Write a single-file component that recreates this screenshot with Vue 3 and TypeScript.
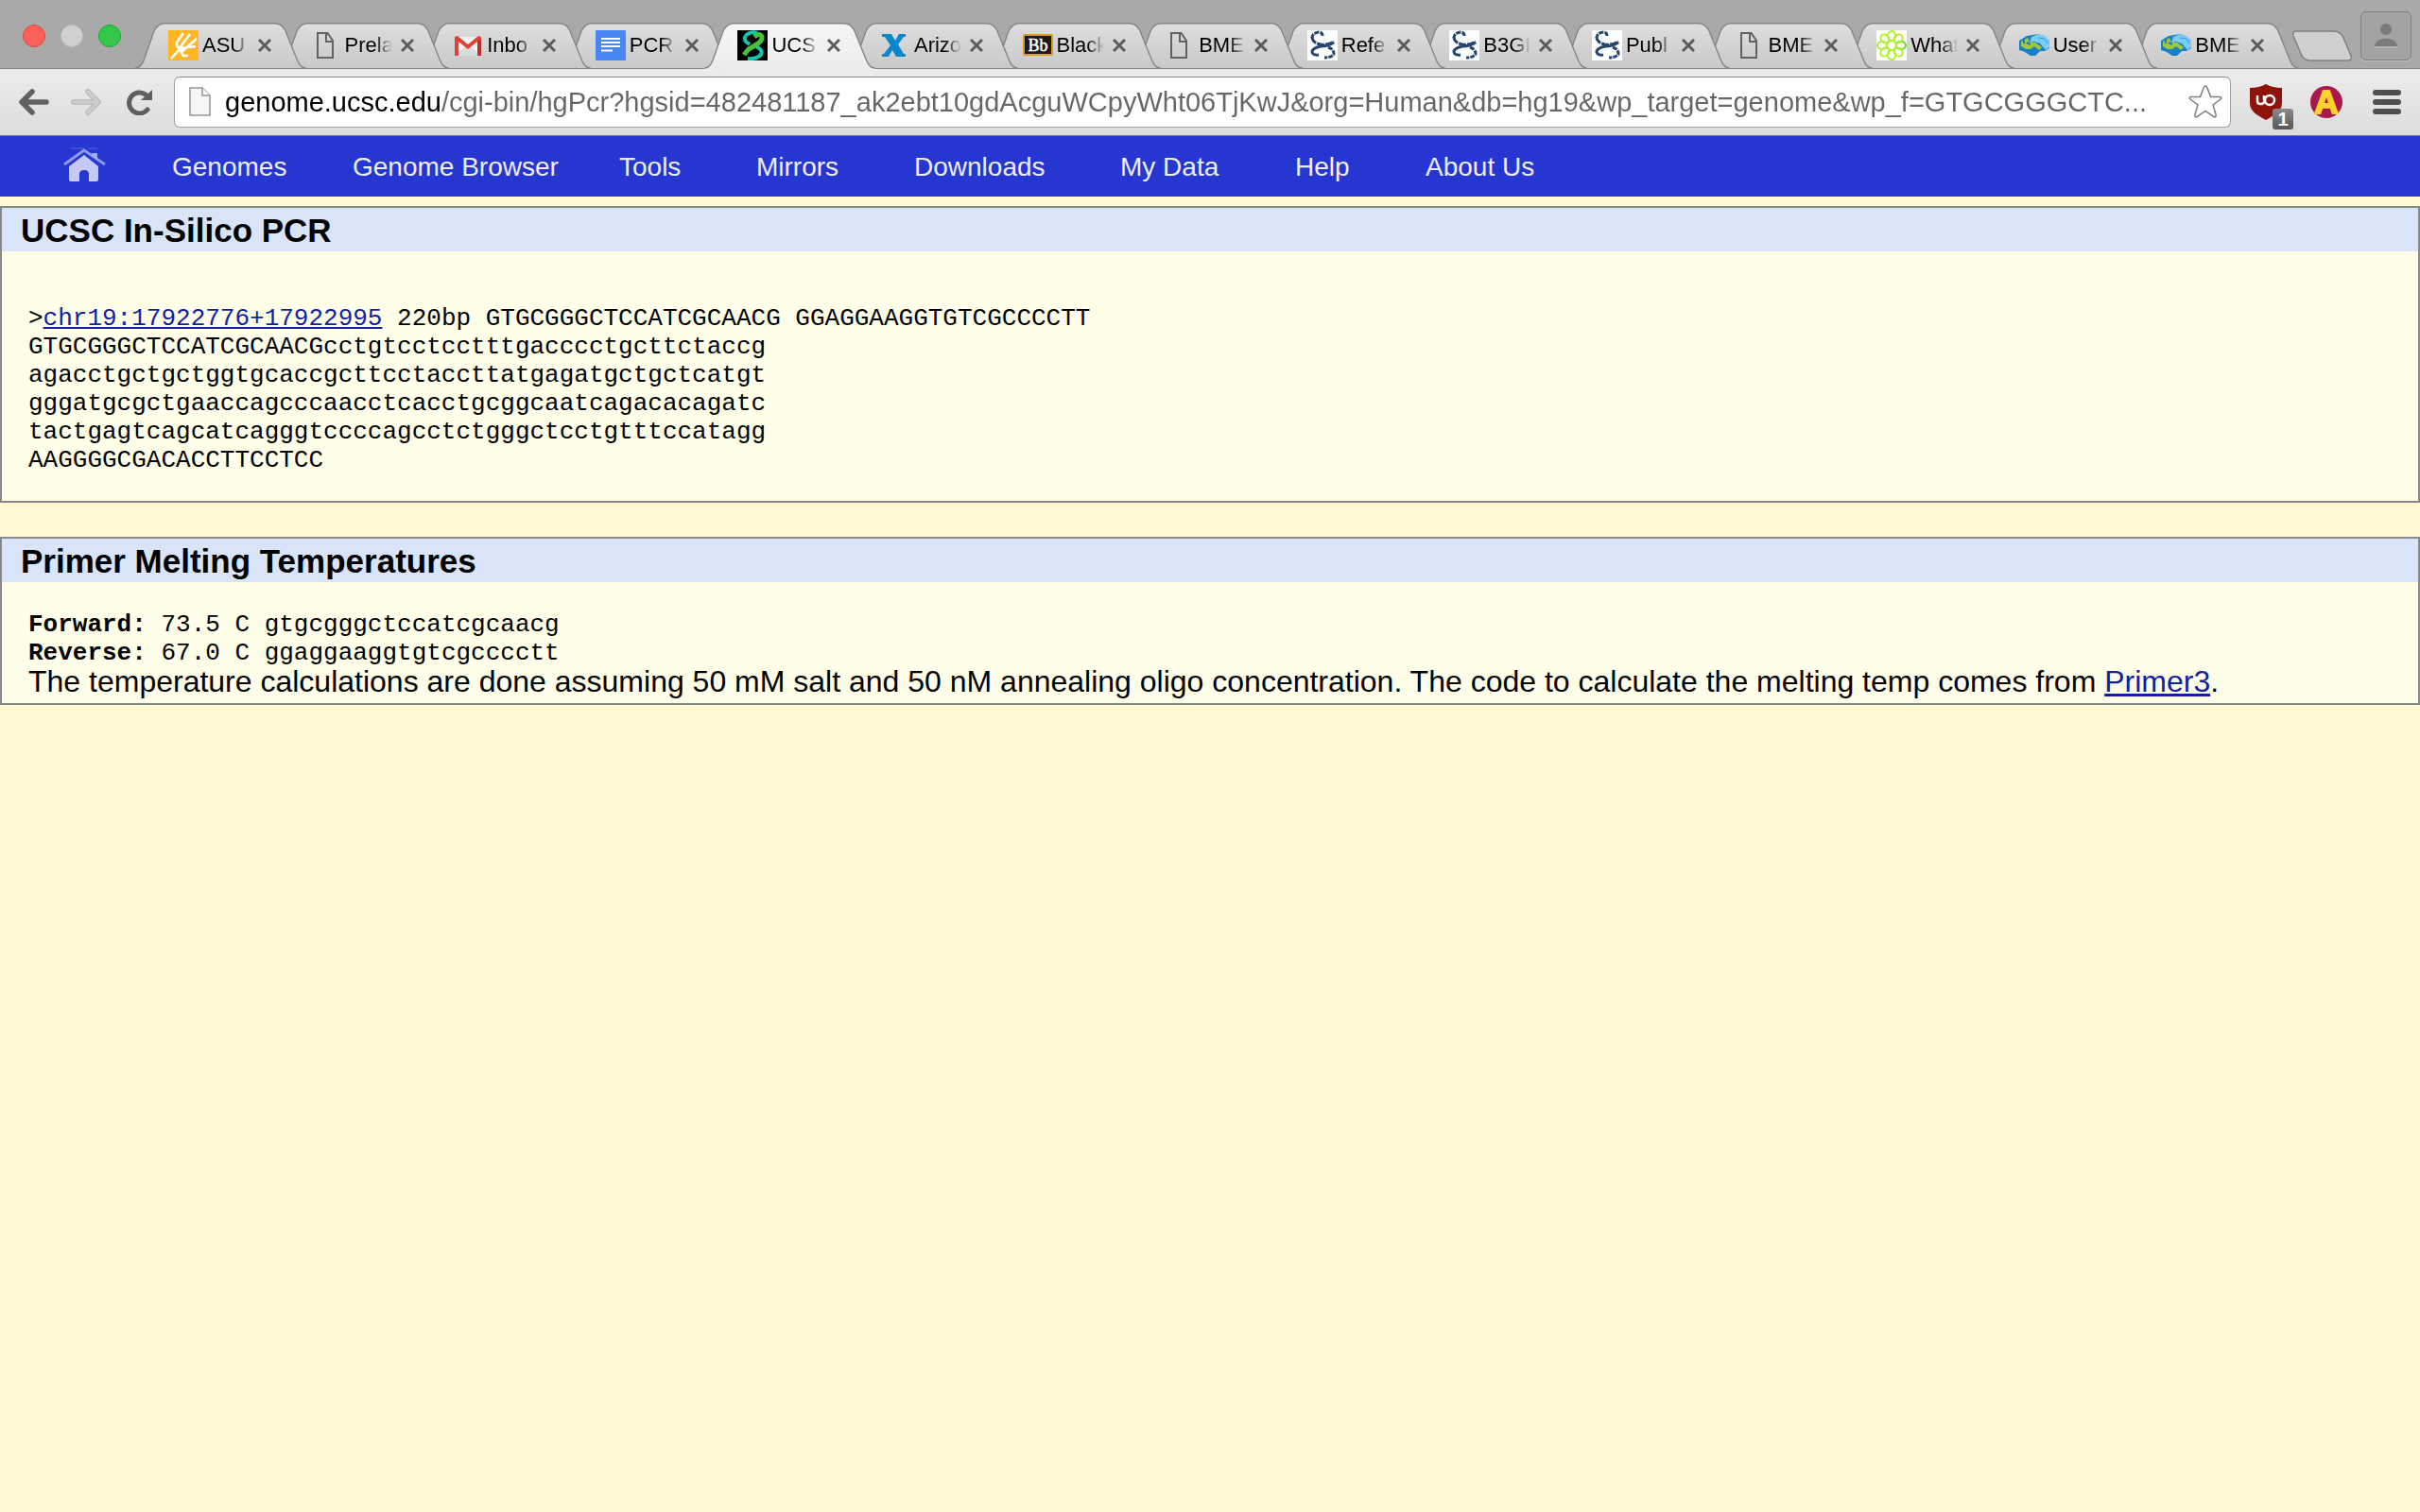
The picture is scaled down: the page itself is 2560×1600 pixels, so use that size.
<script setup lang="ts">
import { ref } from 'vue'

type Icon = 'fork' | 'page' | 'mail' | 'doc' | 'genome' | 'xtab' | 'board' | 'ncbi' | 'flower' | 'globe'

interface Tab {
  title: string
  icon: Icon
}

interface Primer {
  label: string
  temp: string
  seq: string
}

const tabs: Tab[] = [
  { title: 'ASU', icon: 'fork' },
  { title: 'Prela', icon: 'page' },
  { title: 'Inbo', icon: 'mail' },
  { title: 'PCR', icon: 'doc' },
  { title: 'UCS', icon: 'genome' },
  { title: 'Arizo', icon: 'xtab' },
  { title: 'Black', icon: 'board' },
  { title: 'BME', icon: 'page' },
  { title: 'Refe', icon: 'ncbi' },
  { title: 'B3GI', icon: 'ncbi' },
  { title: 'Publ', icon: 'ncbi' },
  { title: 'BME', icon: 'page' },
  { title: 'What', icon: 'flower' },
  { title: 'User', icon: 'globe' },
  { title: 'BME', icon: 'globe' },
]
const active = ref(4)

// Each tab lies over the one to its right; the active tab lies over all.
const stack = (i: number): number => (i === active.value ? tabs.length + 1 : tabs.length - i)

const url = ref(
  'genome.ucsc.edu/cgi-bin/hgPcr?hgsid=482481187_ak2ebt10gdAcguWCpyWht06TjKwJ&org=Human&db=hg19&wp_target=genome&wp_f=GTGCGGGCTC...',
)

const menu: string[] = ['Genomes', 'Genome Browser', 'Tools', 'Mirrors', 'Downloads', 'My Data', 'Help', 'About Us']

const product: string[] = [
  'GTGCGGGCTCCATCGCAACGcctgtcctcctttgacccctgcttctaccg',
  'agacctgctgctggtgcaccgcttcctaccttatgagatgctgctcatgt',
  'gggatgcgctgaaccagcccaacctcacctgcggcaatcagacacagatc',
  'tactgagtcagcatcagggtccccagcctctgggctcctgtttccatagg',
  'AAGGGGCGACACCTTCCTCC',
]

const primers: Primer[] = [
  { label: 'Forward:', temp: '73.5 C', seq: 'gtgcgggctccatcgcaacg' },
  { label: 'Reverse:', temp: '67.0 C', seq: 'ggaggaaggtgtcgcccctt' },
]

const petals: number[] = [0, 45, 90, 135, 180, 225, 270, 315]
</script>

<template>
  <div class="window">
    <header class="strip">
      <div class="lights">
        <button class="light red" aria-label="Close window"></button>
        <button class="light grey" aria-label="Minimise window"></button>
        <button class="light green" aria-label="Zoom window"></button>
      </div>
      <div class="tabs">
        <div
          v-for="(tab, i) in tabs"
          :key="i"
          class="tab"
          :class="{ active: i === active }"
          :style="{ zIndex: stack(i) }"
          @click="active = i"
        >
          <svg class="shape" viewBox="0 0 182 49" preserveAspectRatio="none" aria-hidden="true">
            <defs>
              <linearGradient :id="'fill' + i" x1="0" y1="0" x2="0" y2="1">
                <stop offset="0" :stop-color="i === active ? '#f5f5f5' : '#dedede'" />
                <stop offset="1" :stop-color="i === active ? '#ececec' : '#c9c9ca'" />
              </linearGradient>
            </defs>
            <path
              :fill="'url(#fill' + i + ')'"
              :d="
                i === active
                  ? 'M0 49V48C5 48 7 45 9 40L20 9C23 3 26 .5 31 .5H148C154 .5 157 4 159 8L172 40C174 45 176 48 181 48V49Z'
                  : 'M0 48C5 48 7 45 9 40L20 9C23 3 26 .5 31 .5H148C154 .5 157 4 159 8L172 40C174 45 176 48 181 48Z'
              "
            />
            <path
              fill="none"
              stroke="#858585"
              vector-effect="non-scaling-stroke"
              stroke-width="1.4"
              d="M0 48C5 48 7 45 9 40L20 9C23 3 26 .7 31 .7H148C154 .7 157 4 159 8L172 40C174 45 176 48 181 48"
            />
          </svg>
          <svg class="favicon" viewBox="0 0 32 32" aria-hidden="true">
            <g v-if="tab.icon === 'fork'">
              <rect width="32" height="32" fill="#ffb625" />
              <path
                d="M3 30 12 20M16 3 9 13Q8 19 14 19L29 17M23 4 11 20M30 9 15 22L11 19M12 20l4 7h5"
                fill="none"
                stroke="#fff"
                stroke-width="2.6"
              />
            </g>
            <g v-else-if="tab.icon === 'page'" fill="none" stroke="#626262" stroke-width="2">
              <path d="M7 3H17.500L23 11V29H7Z" />
              <path d="M16 3V12H23" />
            </g>
            <g v-else-if="tab.icon === 'mail'">
              <path d="M2 7H30V27H2Z" fill="#f2f2f2" />
              <path d="M2 27 16 15 30 27Z" fill="#dcdcdc" />
              <path d="M2 7V27H6V12L16 20 26 12V27H30V7L27 6 16 15 5 6Z" fill="#dc4437" />
              <path d="M26 12V27H30V9Z" fill="#b8322a" />
            </g>
            <g v-else-if="tab.icon === 'doc'">
              <rect width="32" height="32" rx="1" fill="#4787f4" />
              <path d="M6 9H26M6 13H26M6 17H26M6 21.500H18" stroke="#fff" stroke-width="2" />
            </g>
            <g v-else-if="tab.icon === 'genome'" fill="none" stroke-width="4">
              <rect width="32" height="32" fill="#000" />
              <path d="M21 3C12 0 5 7 9 12L13 15" stroke="#0cc9b4" />
              <path d="M20 17L24 20C29 25 22 31 11 30" stroke="#0cc9b4" />
              <path d="M18 7C24 2 28 6 25 11Q23 14 12 20L7 26" stroke="#49c136" stroke-width="5" />
            </g>
            <g v-else-if="tab.icon === 'xtab'">
              <path
                d="M2 4H12L16 11 20 4H27V7H25L19 15 25 25H27V28H17L13 21 9 28H2V25H4L11 16 5 7H2Z"
                fill="#0b86cb"
              />
            </g>
            <g v-else-if="tab.icon === 'board'">
              <rect x="1" y="5" width="30" height="21" rx="1" fill="#1a1a1a" stroke="#d79a22" stroke-width="2" />
              <text
                x="16"
                y="22"
                text-anchor="middle"
                font-family="Liberation Serif, serif"
                font-size="18"
                fill="#fff"
                stroke="#fff"
                stroke-width="0.5"
              >Bb</text>
            </g>
            <g v-else-if="tab.icon === 'ncbi'" fill="none" stroke="#27466f">
              <rect width="32" height="32" fill="#fdfefe" stroke="none" />
              <path d="M16 6Q16 2 12 2Q5 3 5 8" stroke-width="3" stroke-dasharray="5 1" />
              <path d="M5 7Q5 13 14 15Q22 16 28 12" stroke-width="3" stroke-dasharray="8 1" />
              <path d="M28 13Q22 17 14 17Q5 19 5 23Q6 27 12 26" stroke-width="3" />
              <path d="M22 18Q28 20 28 25Q26 29 18 29" stroke-width="3" stroke-dasharray="5 1" />
            </g>
            <g v-else-if="tab.icon === 'flower'" fill="none" stroke-width="2">
              <rect width="32" height="32" fill="#fff" stroke="none" />
              <ellipse
                v-for="a in petals"
                :key="a"
                cx="26"
                cy="16"
                rx="5"
                ry="4"
                :transform="'rotate(' + a + ' 16 16)'"
                :stroke="a === 0 ? '#5fdc1c' : '#b0f02c'"
              />
              <circle cx="16" cy="16" r="5" stroke="#b0f02c" />
            </g>
            <g v-else>
              <path d="M0 11 8 6 14 5 20 4 26 6 32 11V19L27 22 22 22 17 27H12L6 23 0 21Z" fill="#1a7fc4" />
              <path d="M13 7 20 4 27 6 32 11V18L28 21 22 14 16 12 11 13Z" fill="#77cdf5" />
              <path d="M20 8 27 9 30 14" fill="none" stroke="#3c9fdc" stroke-width="1" />
              <path d="M2 12 9 8 11 13 17 13 24 18 21 21 16 17 12 20 7 20 2 17Z" fill="#a2c93a" />
              <path d="M8 13 12 15M18 20 14 23M5 9V14M13 21 17 25" fill="none" stroke="#1a7fc4" stroke-width="2" />
            </g>
          </svg>
          <span class="title">{{ tab.title }}</span>
          <button class="close" aria-label="Close tab">
            <svg viewBox="0 0 14 14" width="14" height="14">
              <path d="M1 1 13 13M13 1 1 13" stroke="#5c5c5c" stroke-width="3" />
            </svg>
          </button>
        </div>
      </div>
      <button class="newtab" aria-label="New tab">
        <svg viewBox="0 0 65 34" width="65" height="34">
          <path
            d="M5 1H45C50 1 53 3 55 8L63 27C64 30 63 32 60 32H20C15 32 12 30 10 25L2 6C1 3 2 1 5 1Z"
            fill="#cfcfcf"
            stroke="#808080"
            stroke-width="1.500"
          />
        </svg>
      </button>
      <button class="profile" aria-label="Profile">
        <svg viewBox="0 0 26 28" width="26" height="28">
          <circle cx="13" cy="7" r="6" fill="#7b7b7b" />
          <path d="M1 25C1 14 25 14 25 25Z" fill="#7b7b7b" />
          <path d="M1 26H25" stroke="#c8c8c8" stroke-width="1" />
        </svg>
      </button>
    </header>

    <div class="toolbar">
      <button class="tool" aria-label="Back">
        <svg viewBox="0 0 32 28" width="32" height="28">
          <path
            d="M14 3 3 14 14 25M4 14H29"
            fill="none"
            stroke="#616161"
            stroke-width="5.500"
            stroke-linecap="round"
            stroke-linejoin="round"
          />
        </svg>
      </button>
      <button class="tool" aria-label="Forward">
        <svg viewBox="0 0 32 28" width="32" height="28" fill="none" stroke-linecap="round" stroke-linejoin="round">
          <path d="M18 3 29 14 18 25M3 14H28" stroke="#b4b4b4" stroke-width="5.500" />
          <path d="M18 3 29 14 18 25M3 14H28" stroke="#cdcdcd" stroke-width="3.500" />
        </svg>
      </button>
      <button class="tool" aria-label="Reload">
        <svg viewBox="-4 0 32 28" width="32" height="28">
          <path
            d="M22 22A11 11 0 1 1 20 6"
            fill="none"
            stroke="#5e5e5e"
            stroke-width="5"
            stroke-linecap="round"
          />
          <path d="M27 1V12H15Z" fill="#5e5e5e" />
        </svg>
      </button>
      <div class="omnibox">
        <svg class="sheet" viewBox="0 0 24 32" width="24" height="32">
          <path d="M1 1H14L22 9V30H1Z" fill="#f6f6f6" stroke="#949494" stroke-width="1.500" />
          <path d="M14 1V9H22" fill="#fff" stroke="#949494" stroke-width="1.500" />
        </svg>
        <input v-model="url" class="url" type="text" aria-label="Address" spellcheck="false" />
        <button class="star" aria-label="Bookmark this page">
          <svg viewBox="0 0 36 36" width="36" height="36">
            <path
              d="M18 1Q19 1 20 3L23.500 12.500H33Q36 13 34 15L26 21 29 31Q29.500 35 27 33.500L18 27.500 9 33.500Q6.500 35 7 31L10 21 2 15Q0 13 3 12.500H12.500L16 3Q17 1 18 1Z"
              fill="#fff"
              stroke="#7f7f7f"
              stroke-width="1.500"
            />
          </svg>
        </button>
      </div>
      <div class="extensions">
        <button class="shield" aria-label="uBlock Origin">
          <svg viewBox="0 0 34 38" width="34" height="38">
            <path d="M17 0Q24 4 34 4V20C34 29 26 33 17 38C8 33 0 29 0 20V4Q10 4 17 0Z" fill="#8e130c" />
            <path
              d="M8 12V18Q8 21 11 21H12Q15 21 16 17M15 12V17"
              fill="none"
              stroke="#fff"
              stroke-width="2.500"
            />
            <circle cx="21" cy="17" r="5" fill="none" stroke="#fff" stroke-width="2.500" />
          </svg>
          <span class="badge">1</span>
        </button>
        <button class="letter" aria-label="Extension">A</button>
        <button class="burger" aria-label="Menu">
          <svg viewBox="0 0 30 26" width="30" height="26">
            <path d="M3 3H27M3 13H27M3 23H27" stroke="#4f4f4f" stroke-width="6" stroke-linecap="round" />
          </svg>
        </button>
      </div>
    </div>

    <nav class="menu">
      <a class="home" href="#" aria-label="Home">
        <svg viewBox="0 0 46 38" width="46" height="38">
          <path d="M8 1H22M26 1H36" stroke="#5a66dd" stroke-width="1" />
          <path d="M1 18 22 3 44 18" fill="none" stroke="#8f97ea" stroke-width="3" />
          <path d="M30 6H36V13L30 9Z" fill="#a4abee" />
          <path d="M6 20 22 8 37 20V34Q37 36 34 36H27V28Q27 24 22 24T17 28V36H9Q6 36 6 34Z" fill="#c5c9f5" />
        </svg>
      </a>
      <a v-for="item in menu" :key="item" href="#">{{ item }}</a>
    </nav>

    <main>
      <section class="panel">
        <h2>UCSC In-Silico PCR</h2>
        <div class="body result">
          <pre>&gt;<a href="#">chr19:17922776+17922995</a> 220bp GTGCGGGCTCCATCGCAACG GGAGGAAGGTGTCGCCCCTT</pre>
          <pre v-for="line in product" :key="line">{{ line }}</pre>
        </div>
      </section>
      <section class="panel">
        <h2>Primer Melting Temperatures</h2>
        <div class="body melting">
          <pre v-for="p in primers" :key="p.label"><b>{{ p.label }}</b> {{ p.temp }} {{ p.seq }}</pre>
          <p>
            The temperature calculations are done assuming 50 mM salt and 50 nM annealing oligo concentration. The
            code to calculate the melting temp comes from <a href="#">Primer3</a>.
          </p>
        </div>
      </section>
    </main>
  </div>
</template>

<style>
body {
  background: #fff8d2;
}
</style>

<style scoped>
.window {
  min-height: 100vh;
  background: #fff8d2;
  font-family: "Liberation Sans", Arial, sans-serif;
  color: #000;
}
button {
  padding: 0;
  border: 0;
  background: none;
  font: inherit;
}
svg {
  display: block;
}

.strip {
  display: flex;
  height: 72px;
  background: #a9a9a9;
  border-bottom: 1px solid #858585;
}
.lights {
  display: flex;
  gap: 16px;
  margin: 26px 15px 0 24px;
}
.light {
  box-sizing: border-box;
  width: 24px;
  height: 24px;
  border: 1px solid;
  border-radius: 50%;
}
.red {
  background: #fc605b;
  border-color: #df4744;
}
.grey {
  background: #d0d0d0;
  border-color: #bcbcbc;
}
.green {
  background: #34c84a;
  border-color: #24a732;
}
.tabs {
  display: flex;
  flex: 1;
  min-width: 0;
  margin-top: 24px;
}
.tab {
  position: relative;
  display: flex;
  flex: 1 1 0;
  align-items: center;
  min-width: 0;
  height: 48px;
  box-sizing: border-box;
  padding-left: 35px;
}
.shape {
  position: absolute;
  left: 0;
  top: 0;
  width: calc(100% + 31px);
  height: 49px;
}
.favicon {
  position: relative;
  flex: none;
  width: 32px;
  height: 32px;
}
.title {
  position: relative;
  flex: none;
  width: 55px;
  margin-left: 4px;
  font-size: 22px;
  line-height: 48px;
  white-space: nowrap;
  mask-image: linear-gradient(90deg, #000 32px, transparent 50px);
}
.close {
  position: relative;
  flex: none;
  margin-left: 4px;
}
.newtab {
  align-self: flex-start;
  margin: 32px 8px 0 22px;
}
.profile {
  display: flex;
  align-items: center;
  justify-content: center;
  box-sizing: border-box;
  width: 54px;
  height: 52px;
  margin: 12px 9px 0 0;
  border: 1px solid #7d7d7d;
  border-radius: 6px;
  background: #a3a3a3;
  box-shadow: 0 1px 0 #bbb;
}

.toolbar {
  display: flex;
  align-items: center;
  height: 70px;
  padding-left: 8px;
  background: linear-gradient(#ececec, #dcdcdc);
  border-bottom: 1px solid #7b7b7b;
}
.tool {
  display: flex;
  justify-content: center;
  width: 55px;
}
.omnibox {
  display: flex;
  flex: 1;
  align-items: center;
  box-sizing: border-box;
  min-width: 0;
  height: 54px;
  margin-left: 11px;
  padding: 0 8px 0 15px;
  border: 1px solid #a0a0a0;
  border-top-color: #868686;
  border-radius: 6px;
  background: #fff;
}
.url {
  flex: 1;
  min-width: 0;
  height: 48px;
  margin: 0 8px 0 14px;
  padding: 0;
  border: 0;
  outline: 0;
  font-family: inherit;
  font-size: 29px;
  color: #666;
  background: linear-gradient(90deg, #000 229px, #666 229px);
  background-clip: text;
  -webkit-text-fill-color: transparent;
}
.extensions {
  display: flex;
  align-items: center;
  padding: 0 20px;
}
.shield {
  position: relative;
  width: 48px;
  margin-right: 16px;
}
.badge {
  position: absolute;
  left: 24px;
  top: 26px;
  width: 22px;
  border-radius: 3px;
  background: linear-gradient(#8b8b8b, #565656);
  color: #fff;
  font-size: 20px;
  font-weight: bold;
  line-height: 22px;
}
.letter {
  width: 34px;
  height: 34px;
  margin-right: 32px;
  border-radius: 50%;
  background: #a9184c;
  color: #fdd22b;
  font-size: 35px;
  font-weight: bold;
  line-height: 34px;
  -webkit-text-stroke: 2px #fdd22b;
}

.menu {
  display: grid;
  grid-template-columns: 115px 191px 282px 145px 167px 218px 185px 138px auto;
  align-items: center;
  box-sizing: border-box;
  height: 64px;
  padding: 1px 0 0 67px;
  background: #2636d1;
  font-size: 28px;
  line-height: 63px;
}
.menu a {
  color: #eeeefb;
  text-decoration: none;
}
.home svg {
  margin-bottom: 4px;
}

main {
  display: flex;
  flex-direction: column;
  gap: 36px;
  padding-top: 10px;
}
.panel {
  border: 2px solid #888;
  background: #fffee8;
}
h2 {
  margin: 0;
  padding: 2px 0 0 20px;
  background: #d9e4f8;
  font-size: 35px;
  line-height: 44px;
}
.body {
  padding-left: 28px;
}
.result {
  padding-top: 56px;
  padding-bottom: 28px;
}
.melting {
  padding-top: 30px;
  padding-bottom: 8px;
}
pre {
  margin: 0;
  font-family: "Liberation Mono", "Courier New", monospace;
  font-size: 26px;
  line-height: 30px;
}
p {
  margin: 0;
  font-size: 32px;
  line-height: 30px;
}
.panel a {
  color: #121f9f;
}
</style>
